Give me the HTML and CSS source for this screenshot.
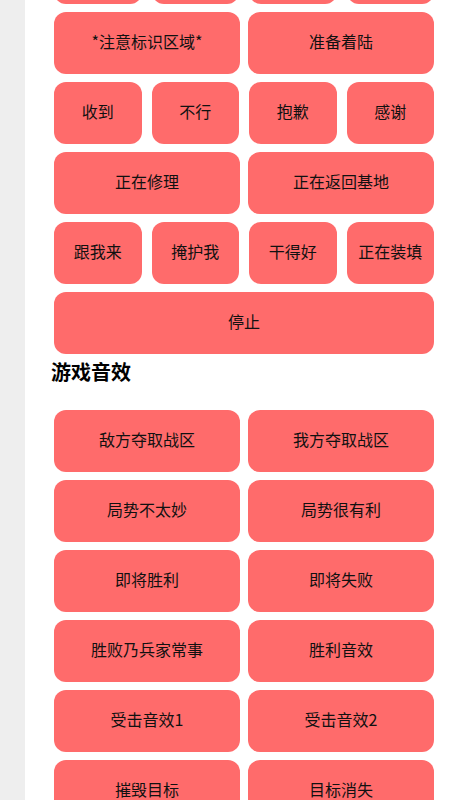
FILE: index.html
```html
<!DOCTYPE html>
<html lang="zh-CN">
<head>
<meta charset="utf-8">
<title>快捷语音</title>
<link rel="stylesheet" href="styles.css">
</head>
<body>
<div class="page">
  <aside class="side"></aside>
  <main class="main">
    <section class="group scrolled">
      <div class="row four">
        <button class="btn" aria-label="需要支援"></button>
        <button class="btn" aria-label="撤退"></button>
        <button class="btn" aria-label="进攻"></button>
        <button class="btn" aria-label="防守"></button>
      </div>
      <div class="row two">
        <button class="btn">*注意标识区域*</button>
        <button class="btn">准备着陆</button>
      </div>
      <div class="row four">
        <button class="btn">收到</button>
        <button class="btn">不行</button>
        <button class="btn">抱歉</button>
        <button class="btn">感谢</button>
      </div>
      <div class="row two">
        <button class="btn">正在修理</button>
        <button class="btn">正在返回基地</button>
      </div>
      <div class="row four">
        <button class="btn">跟我来</button>
        <button class="btn">掩护我</button>
        <button class="btn">干得好</button>
        <button class="btn">正在装填</button>
      </div>
      <div class="row one">
        <button class="btn">停止</button>
      </div>
    </section>
    <h2 class="heading">游戏音效</h2>
    <section class="group">
      <div class="row two">
        <button class="btn">敌方夺取战区</button>
        <button class="btn">我方夺取战区</button>
      </div>
      <div class="row two">
        <button class="btn">局势不太妙</button>
        <button class="btn">局势很有利</button>
      </div>
      <div class="row two">
        <button class="btn">即将胜利</button>
        <button class="btn">即将失败</button>
      </div>
      <div class="row two">
        <button class="btn">胜败乃兵家常事</button>
        <button class="btn">胜利音效</button>
      </div>
      <div class="row two">
        <button class="btn">受击音效1</button>
        <button class="btn">受击音效2</button>
      </div>
      <div class="row two">
        <button class="btn">摧毁目标</button>
        <button class="btn">目标消失</button>
      </div>
    </section>
  </main>
</div>
</body>
</html>
```

FILE: styles.css
```css
html, body {
  margin: 0;
  padding: 0;
  background: #ffffff;
  height: 100%;
  overflow: hidden;
}

.page {
  display: flex;
  min-height: 800px;
  font-family: "Noto Sans CJK SC", "Noto Sans", sans-serif;
}

.side {
  width: 25px;
  flex: none;
  background: #eeeeee;
}

.main {
  flex: 1;
  padding: 0 16px 0 29px;
}

.group {
  display: flex;
  flex-direction: column;
  gap: 8px;
}

.scrolled {
  margin-top: -58px;
}

.row {
  display: grid;
}

.row.one {
  grid-template-columns: 1fr;
}

.row.two {
  grid-template-columns: 1fr 1fr;
  column-gap: 8px;
}

.row.four {
  grid-template-columns: repeat(4, 1fr);
  column-gap: 10px;
}

.btn {
  height: 62px;
  border: none;
  border-radius: 12px;
  background: #ff6b6b;
  color: #111111;
  font-family: "Noto Sans CJK SC", "Noto Sans", sans-serif;
  font-size: 16px;
  padding: 0 0 4px 0;
  margin: 0;
  text-align: center;
}

.heading {
  margin: 4px 0 24px -3px;
  font-size: 20px;
  line-height: 28px;
  font-weight: 700;
  color: #000000;
}
```
